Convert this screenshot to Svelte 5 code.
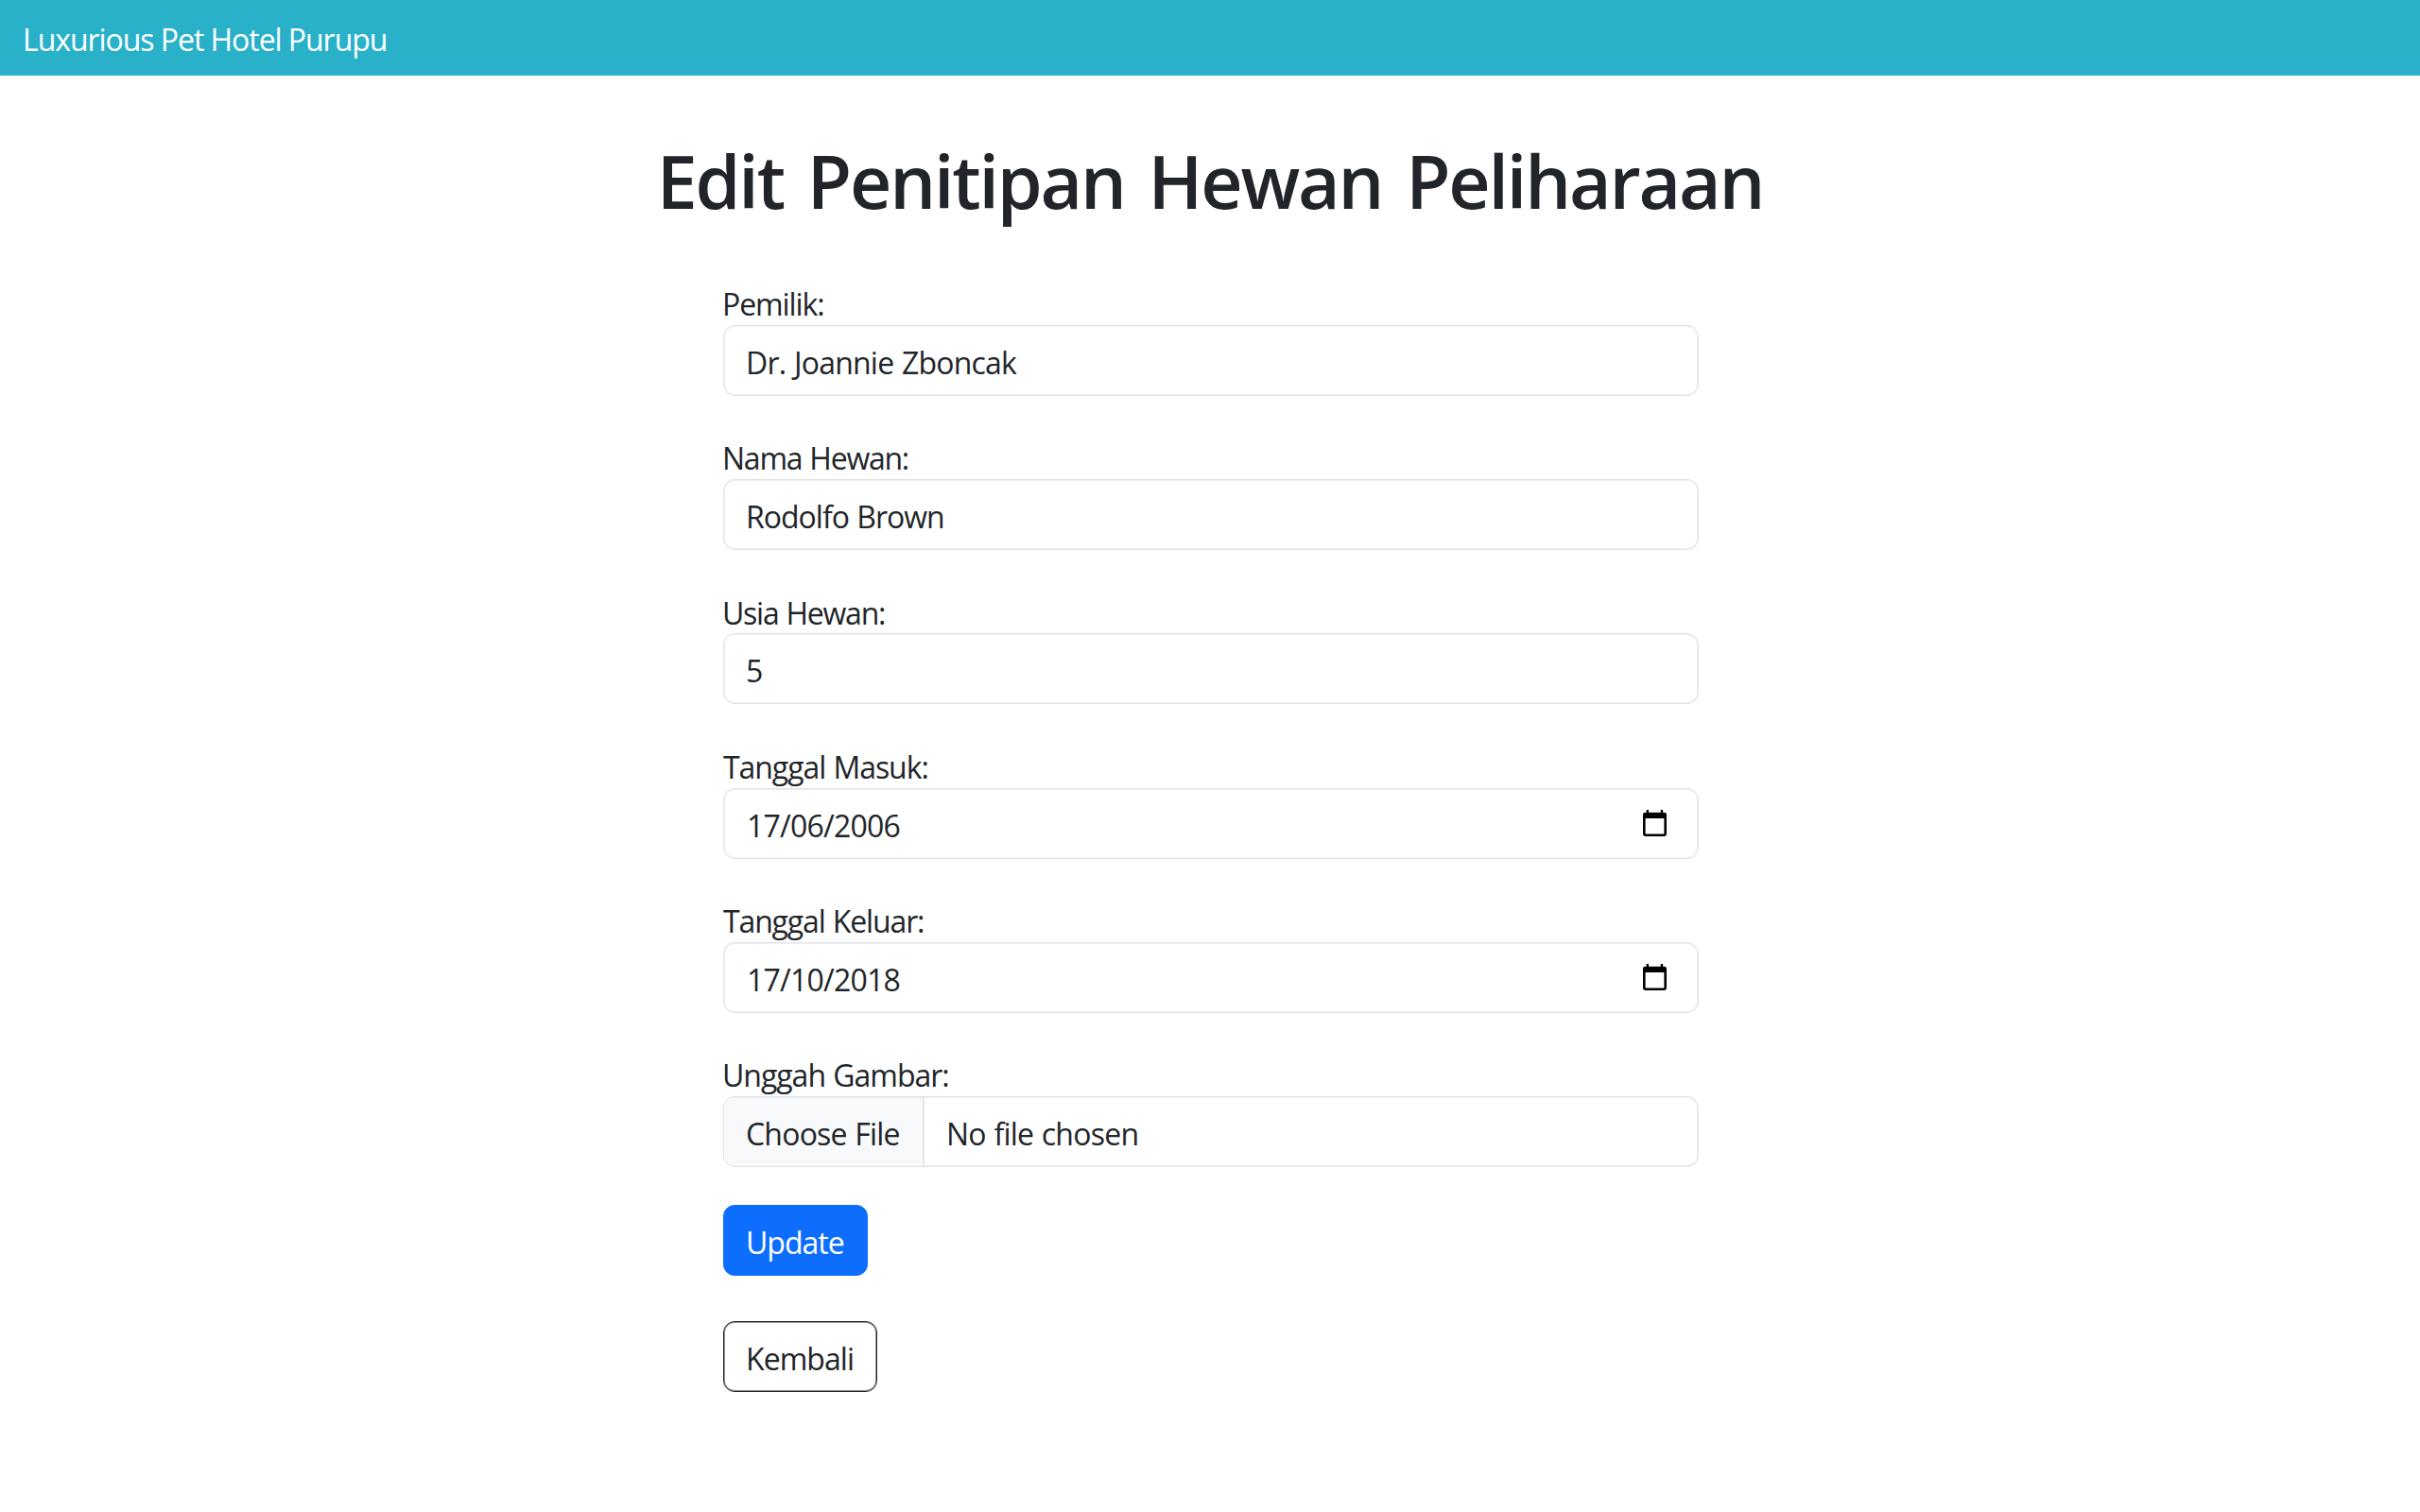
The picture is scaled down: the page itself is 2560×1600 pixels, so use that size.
<script>
  // tracking: letter-spacing in px; indent: optical offset of the label's first letter
  const fields = [
    { label: 'Pemilik:', labelTracking: -1.1, indent: -1, value: 'Dr. Joannie Zboncak', tracking: -0.78, kind: 'text' },
    { label: 'Nama Hewan:', labelTracking: -1.25, indent: -1, value: 'Rodolfo Brown', tracking: -1, kind: 'text' },
    { label: 'Usia Hewan:', labelTracking: -1.25, indent: -1, value: '5', tracking: 0, kind: 'text' },
    { label: 'Tanggal Masuk:', labelTracking: -1.06, indent: 0, value: '17/06/2006', tracking: -0.78, kind: 'date' },
    { label: 'Tanggal Keluar:', labelTracking: -1.14, indent: 0, value: '17/10/2018', tracking: -0.78, kind: 'date' },
    { label: 'Unggah Gambar:', labelTracking: -1.02, indent: -1, value: 'No file chosen', tracking: -0.76, kind: 'file' }
  ];
</script>

<nav class="navbar"><span class="brand">Luxurious Pet Hotel Purupu</span></nav>

<main class="page">
  <h1>Edit Penitipan Hewan Peliharaan</h1>

  <form class="form">
    {#each fields as f}
      <div class="field">
        <div class="label" style:letter-spacing="{f.labelTracking}px" style:text-indent="{f.indent}px">{f.label}</div>
        <div class="control {f.kind}">
          {#if f.kind === 'file'}
            <span class="choose">Choose File</span>
          {/if}
          <span class="value" style:letter-spacing="{f.tracking}px">{f.value}</span>
          {#if f.kind === 'date'}
            <svg class="calendar" viewBox="0 0 25 28" aria-hidden="true">
              <path
                fill="#000"
                fill-rule="evenodd"
                d="M3.7 0H6v2.7h12.8V0h2.3v2.7h1.5A2.4 2.4 0 0 1 25 5.1v20.5a2.4 2.4 0 0 1-2.4 2.4H2.4A2.4 2.4 0 0 1 0 25.6V5.1a2.4 2.4 0 0 1 2.4-2.4h1.3zM2.6 9v16.6h19.8V9z"
              />
            </svg>
          {/if}
        </div>
      </div>
    {/each}

    <button type="button" class="btn primary">Update</button>
    <button type="button" class="btn outline">Kembali</button>
  </form>
</main>

<style>
  :global(body) {
    margin: 0;
    background: #fff;
  }

  .navbar,
  .page,
  .btn {
    font-family: 'Open Sans', 'Noto Sans', sans-serif;
    font-size: 32px;
    font-weight: 400;
    line-height: 49px;
    color: #212529;
    white-space: nowrap;
  }

  .navbar {
    box-sizing: border-box;
    height: 80px;
    padding: 17px 24px 0;
    background: #28b1c9;
  }

  .brand {
    display: block;
    color: #fff;
    letter-spacing: -1.05px;
  }

  h1 {
    margin: 0;
    padding-top: 59px;
    font-size: 77px;
    font-weight: 600;
    line-height: 105px;
    letter-spacing: -2.17px;
    word-spacing: 7px;
    text-align: center;
  }

  .form {
    display: flex;
    flex-direction: column;
    align-items: flex-start;
    width: 1032px;
    margin: 51px 0 0 765px;
  }

  .field {
    width: 100%;
    margin-bottom: 39.27px;
  }

  .label {
    box-sizing: border-box;
    height: 48.8px;
    padding-top: 2px;
    word-spacing: 1px;
  }

  .control {
    box-sizing: border-box;
    display: flex;
    align-items: flex-start;
    height: 75px;
    padding: 14px 33px 0 23px;
    border: 1px solid #dee2e6;
    border-radius: 12px;
    box-shadow: inset 0 0 0 1px rgba(222, 226, 230, 0.5);
    overflow: hidden;
    word-spacing: 1px;
  }

  .field {
    height: 124px;
  }

  .date {
    justify-content: space-between;
    padding-left: 24px;
  }

  .calendar {
    width: 25px;
    height: 28px;
    margin-top: 8px;
  }

  .file {
    padding: 0;
  }

  .choose {
    box-sizing: border-box;
    width: 212px;
    height: 73px;
    padding: 14px 0 0 23px;
    background: #f8f9fa;
    border-right: 2px solid #e2e6ea;
    letter-spacing: -0.8px;
    box-shadow: inset 0 1px 0 rgba(222, 226, 230, 0.45);
  }

  .file .value {
    padding: 14px 0 0 23px;
  }

  .btn {
    box-sizing: border-box;
    height: 75px;
    padding: 14px 0 0 23px;
    border: 1px solid transparent;
    border-radius: 12px;
    text-align: left;
    display: flex;
    align-items: flex-start;
  }

  .primary {
    width: 153px;
    background: #0d6efd;
    border-color: #0d6efd;
    color: #fff;
    letter-spacing: -1px;
  }

  .outline {
    width: 163px;
    height: 75px;
    margin-top: 48px;
    background: #fff;
    border-color: #212529;
    box-shadow: inset 0 0 0 1px rgba(33, 37, 41, 0.5);
    letter-spacing: -0.95px;
  }
</style>
